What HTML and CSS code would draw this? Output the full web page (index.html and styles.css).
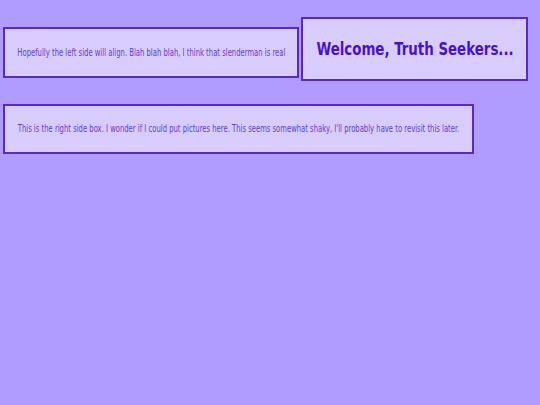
FILE: index.html
```html
<!DOCTYPE html>
<html>
<head>
<meta charset="utf-8">
<link rel="stylesheet" href="styles.css">
</head>
<body>
<div class="page">
  <div class="row">
    <div class="box left-box"><p class="note">Hopefully the left side will align. Blah blah blah, I think that slenderman is real</p></div>
    <div class="box title-box"><h1 class="title">Welcome, Truth Seekers...</h1></div>
  </div>
  <div class="box right-box"><p class="note">This is the right side box. I wonder if I could put pictures here. This seems somewhat shaky, I'll probably have to revisit this later.</p></div>
</div>
</body>
</html>
```

FILE: styles.css
```css
html, body {
  margin: 0;
  padding: 0;
  background: #b09cfe;
}
.page {
  width: 540px;
  height: 405px;
  padding: 17px 0 0 3px;
  box-sizing: border-box;
  font-family: "DejaVu Sans Condensed", "DejaVu Sans", sans-serif;
  overflow: hidden;
}
.row {
  display: flex;
  align-items: flex-start;
  gap: 2px;
}
.box {
  background: #d8ccfc;
  border: 2px solid #5a28c8;
  box-sizing: border-box;
  display: flex;
  align-items: center;
  justify-content: center;
}
.left-box {
  margin-top: 10px;
  width: 296px;
  height: 51px;
}
.title-box {
  width: 227px;
  height: 64px;
}
.right-box {
  margin-top: 23px;
  width: 471px;
  height: 50px;
}
.note {
  margin: 0;
  flex: none;
  font-size: 10px;
  line-height: 12px;
  color: #6040c8;
  white-space: nowrap;
  transform: scaleX(0.76);
}
.title {
  margin: 0;
  flex: none;
  font-size: 17.5px;
  font-weight: bold;
  line-height: 20px;
  color: #4a12c6;
  white-space: nowrap;
  transform: scaleX(0.85);
}
```
